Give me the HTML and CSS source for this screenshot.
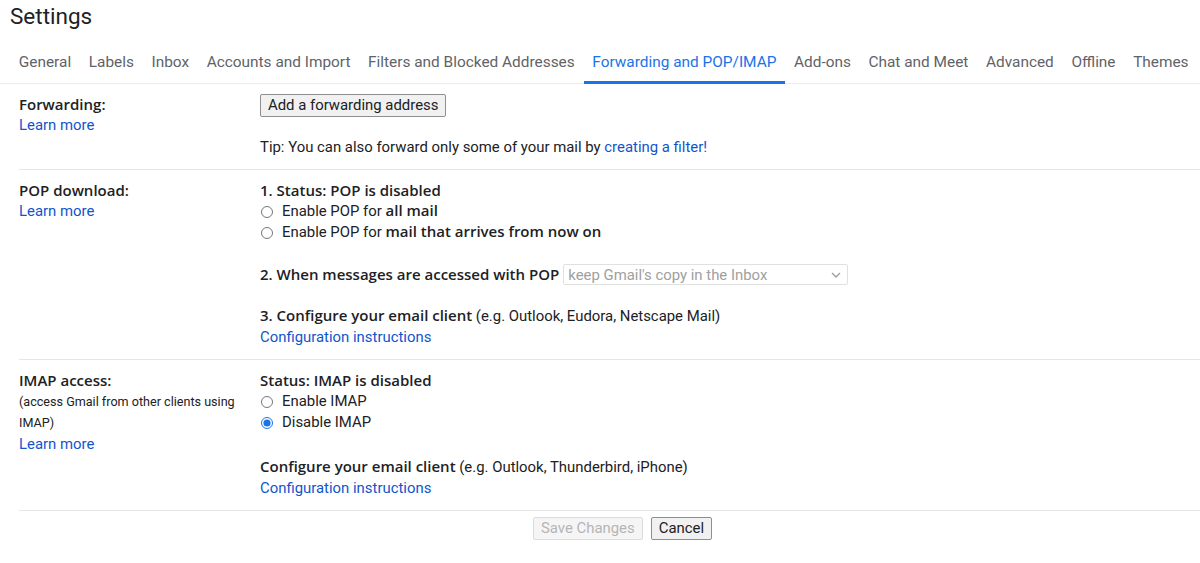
FILE: index.html
```html
<!DOCTYPE html>
<html lang="en">
<head>
<meta charset="utf-8">
<title>Settings</title>
<link rel="stylesheet" href="styles.css">
</head>
<body>
<h1 class="title">Settings</h1>
<nav class="tabs">
  <a class="tab">General</a>
  <a class="tab">Labels</a>
  <a class="tab">Inbox</a>
  <a class="tab">Accounts and Import</a>
  <a class="tab">Filters and Blocked Addresses</a>
  <a class="tab active">Forwarding and POP/IMAP</a>
  <a class="tab">Add-ons</a>
  <a class="tab">Chat and Meet</a>
  <a class="tab">Advanced</a>
  <a class="tab">Offline</a>
  <a class="tab">Themes</a>
</nav>
<main class="content">
  <section class="row first">
    <div class="label">
      <div class="label-title">Forwarding:</div>
      <a class="link">Learn more</a>
    </div>
    <div class="body">
      <button class="btn fwd">Add a forwarding address</button>
      <p class="tip">Tip: You can also forward only some of your mail by <a class="link">creating a filter!</a></p>
    </div>
  </section>
  <section class="row">
    <div class="label">
      <div class="label-title">POP download:</div>
      <a class="link">Learn more</a>
    </div>
    <div class="body">
      <div class="strong">1. Status: POP is disabled</div>
      <label class="opt"><input type="radio" name="pop"><span>Enable POP for <b>all mail</b></span></label>
      <label class="opt"><input type="radio" name="pop"><span>Enable POP for <b>mail that arrives from now on</b></span></label>
      <div class="line flexline gap">
        <b>2. When messages are accessed with POP</b>
        <span class="select-wrap">
          <select class="select" disabled><option>keep Gmail's copy in the Inbox</option></select>
          <svg class="chev" width="10" height="6" viewBox="0 0 10 6"><path d="M1 1l4 4 4-4" fill="none" stroke="#9aa0a6" stroke-width="1.4"/></svg>
        </span>
      </div>
      <div class="line gap"><b>3. Configure your email client</b> (e.g. Outlook, Eudora, Netscape Mail)</div>
      <a class="link line">Configuration instructions</a>
    </div>
  </section>
  <section class="row">
    <div class="label">
      <div class="label-title">IMAP access:</div>
      <div class="small">(access Gmail from other clients using IMAP)</div>
      <a class="link learn2">Learn more</a>
    </div>
    <div class="body">
      <div class="strong">Status: IMAP is disabled</div>
      <label class="opt"><input type="radio" name="imap"><span>Enable IMAP</span></label>
      <label class="opt"><input type="radio" name="imap" checked><span>Disable IMAP</span></label>
      <div class="line gap2"><b>Configure your email client</b> (e.g. Outlook, Thunderbird, iPhone)</div>
      <a class="link line">Configuration instructions</a>
    </div>
  </section>
  <div class="footer">
    <button class="btn disabled" disabled>Save Changes</button>
    <button class="btn">Cancel</button>
  </div>
</main>
</body>
</html>
```
FILE: styles.css
```css
* { box-sizing: border-box; }
body {
  margin: 0;
  font-family: Roboto, "Liberation Sans", Arial, sans-serif;
  font-size: 14.9px;
  color: #202124;
  background: #fff;
}
.title {
  margin: 0;
  padding: 2px 0 0 10px;
  font-weight: 400;
  font-size: 22.5px;
  line-height: 28px;
  color: #202124;
}
.tabs {
  display: flex;
  margin-top: 14px;
  padding-left: 10px;
  border-bottom: 1px solid #eceded;
}
.tab {
  padding: 8px 8.8px 9px;
  font-size: 15.4px;
  line-height: 20px;
  color: #5f6368;
  border-bottom: 3px solid transparent;
  margin-bottom: -1px;
  white-space: nowrap;
}
.tab.active {
  color: #1a73e8;
  border-bottom-color: #1a73e8;
}
.content { margin-left: 19px; }
.row {
  display: grid;
  grid-template-columns: 241px 1fr;
  border-bottom: 1px solid #e6e6e6;
  padding: 9px 0 11px;
  line-height: 21px;
}
.row.first { padding-top: 9px; padding-bottom: 11px; }
.label-title, .strong, b {
  font-family: "Open Sans", Roboto, sans-serif;
  font-weight: 600;
  font-size: 15px;
  color: #202124;
}
.label-title, .strong { line-height: 22px; }
b { line-height: 1; }
.label { display: flex; flex-direction: column; align-items: flex-start; }
.small {
  font-size: 12.6px;
  line-height: 21px;
  width: 228px;
  color: #202124;
}
.learn2 { margin-top: 1px; }
.body { display: flex; flex-direction: column; align-items: flex-start; }
.link { color: #1155cc; text-decoration: none; cursor: pointer; }
.tip { margin: 20px 0 0; }
.opt { display: flex; align-items: center; height: 21px; }
.opt input {
  margin: 0 9px 0 1px;
  width: 12px;
  height: 12px;
  accent-color: #1a73e8;
}
.line { display: block; height: 21px; }
.flexline { display: flex; align-items: center; }
.gap { margin-top: 21px; }
.gap2 { margin-top: 24px; }
.select-wrap { position: relative; display: inline-flex; margin-left: 4px; }
.select {
  appearance: none;
  -webkit-appearance: none;
  width: 285px;
  height: 21px;
  padding: 0 0 0 4px;
  font-family: inherit;
  font-size: 14.9px;
  color: #a0a0a0;
  background: #fff;
  border: 1px solid #e0e0e0;
  border-radius: 2px;
  opacity: 1;
}
.chev { position: absolute; right: 7px; top: 8px; }
.btn {
  font-family: inherit;
  font-size: 14.9px;
  line-height: 19px;
  color: #202124;
  background: #f1f1f1;
  border: 1px solid #8f8f8f;
  border-radius: 2px;
  padding: 1px 7px 1px;
  height: 23px;
}
.btn.fwd { margin-top: 1px; }
.btn.disabled {
  color: #b5b5b5;
  background: #f5f5f5;
  border-color: #dcdcdc;
}
.footer {
  display: flex;
  gap: 8px;
  padding: 6px 0 0 514px;
}
```
